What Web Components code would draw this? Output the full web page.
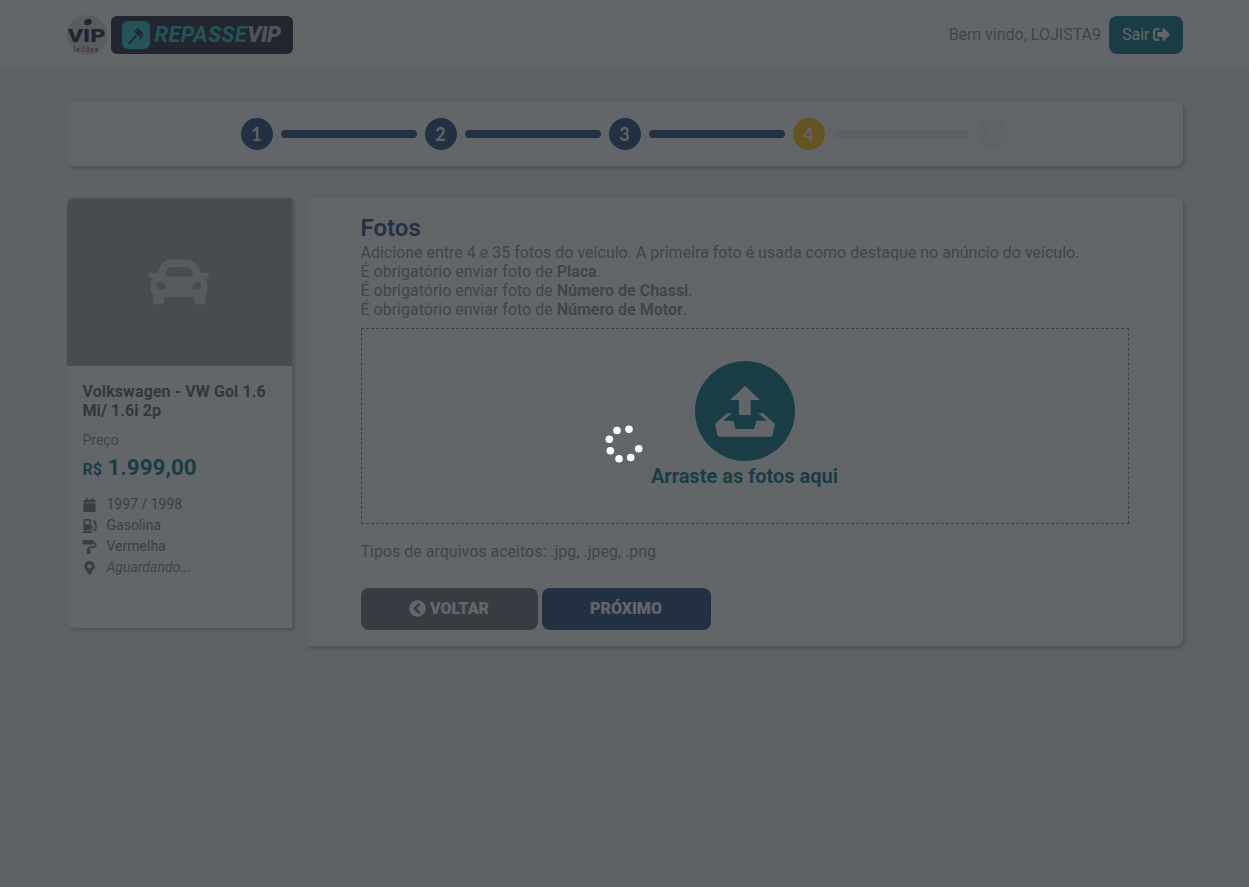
<!DOCTYPE html>
<html lang="pt-BR">
<head>
<meta charset="utf-8">
<title>Repasse VIP</title>
<style>
    html, body { margin: 0; padding: 0; height: 100%; }
    body { background: #eff1ee; font-family: Roboto, "Liberation Sans", sans-serif; font-size: 16px; color: #8c8f94; }
    .wrap { display: flex; gap: 15px; width: 1116px; margin: 32px auto 0; align-items: flex-start; }
</style>
</head>
<body>
<vip-header user="LOJISTA9"></vip-header>
<step-bar current="4" total="5"></step-bar>
<div class="wrap">
    <vehicle-card></vehicle-card>
    <photo-step></photo-step>
</div>
<loading-overlay></loading-overlay>

<script>
const ICONS = {
    car: ['0 0 512 512', 'M499.99 176h-59.87l-16.64-41.6C406.38 91.63 365.57 64 319.5 64h-127c-46.06 0-86.88 27.63-103.99 70.4L71.87 176H12.01C4.2 176-1.53 183.34.37 190.91l6 24C7.7 220.25 12.5 224 18.01 224h20.07C24.65 235.73 16 252.78 16 272v48c0 16.12 6.16 30.67 16 41.93V416c0 17.67 14.33 32 32 32h32c17.67 0 32-14.33 32-32v-32h256v32c0 17.67 14.33 32 32 32h32c17.67 0 32-14.33 32-32v-54.07c9.84-11.25 16-25.8 16-41.93v-48c0-19.22-8.65-36.27-22.07-48H494c5.51 0 10.31-3.75 11.64-9.09l6-24c1.89-7.57-3.84-14.91-11.65-14.91zm-352.06-17.83c7.29-18.22 24.94-30.17 44.57-30.17h127c19.63 0 37.28 11.95 44.57 30.17L384 208H128l19.93-49.83zM96 319.8c-19.2 0-32-12.76-32-31.9S76.8 256 96 256s48 28.71 48 47.85-28.8 15.95-48 15.95zm320 0c-19.2 0-48 3.19-48-15.95S396.8 256 416 256s32 12.76 32 31.9-12.8 31.9-32 31.9z'],
    calendar: ['0 0 448 512', 'M12 192h424c6.6 0 12 5.4 12 12v260c0 26.5-21.5 48-48 48H48c-26.5 0-48-21.5-48-48V204c0-6.6 5.4-12 12-12zm436-44v-36c0-26.5-21.5-48-48-48h-48V12c0-6.6-5.4-12-12-12h-40c-6.6 0-12 5.4-12 12v52H160V12c0-6.6-5.4-12-12-12h-40c-6.6 0-12 5.4-12 12v52H48C21.5 64 0 85.5 0 112v36c0 6.6 5.4 12 12 12h424c6.6 0 12-5.4 12-12z'],
    gas: ['0 0 512 512', 'M336 448H16c-8.8 0-16 7.2-16 16v32c0 8.8 7.2 16 16 16h320c8.8 0 16-7.2 16-16v-32c0-8.8-7.2-16-16-16zm157.2-340.7l-81-81c-6.2-6.2-16.4-6.2-22.6 0l-11.3 11.3c-6.2 6.2-6.2 16.4 0 22.6L416 97.9V160c0 28.1 20.9 51.3 48 55.2V376c0 13.2-10.8 24-24 24s-24-10.8-24-24v-32c0-48.6-39.4-88-88-88h-8V64c0-35.3-28.7-64-64-64H96C60.7 0 32 28.7 32 64v352h288V304h8c22.1 0 40 17.9 40 40v27.8c0 37.7 27 72 64.5 75.9 43 4.3 79.5-29.5 79.5-71.7V152.6c0-17-6.8-33.3-18.8-45.3zM256 192H96V64h160v128z'],
    roller: ['0 0 512 512', 'M416 128V32c0-17.67-14.33-32-32-32H32C14.33 0 0 14.33 0 32v96c0 17.67 14.33 32 32 32h352c17.67 0 32-14.33 32-32zm32-64v128c0 17.67-14.33 32-32 32H256c-35.35 0-64 28.65-64 64v32c-17.67 0-32 14.33-32 32v128c0 17.67 14.33 32 32 32h64c17.67 0 32-14.33 32-32V352c0-17.67-14.33-32-32-32v-32h160c53.02 0 96-42.98 96-96v-64c0-35.35-28.65-64-64-64z'],
    marker: ['0 0 384 512', 'M172.268 501.67C26.97 291.031 0 268.413 0 192 0 85.961 85.961 0 192 0s192 85.961 192 192c0 76.413-26.97 99.031-172.268 309.67-9.535 13.774-29.93 13.773-39.464 0zM192 272c44.183 0 80-35.817 80-80s-35.817-80-80-80-80 35.817-80 80 35.817 80 80 80z'],
    signout: ['0 0 512 512', 'M497 273L329 441c-15 15-41 4.5-41-17v-96H152c-13.3 0-24-10.7-24-24v-96c0-13.3 10.7-24 24-24h136V88c0-21.4 25.9-32 41-17l168 168c9.3 9.4 9.3 24.6 0 34zM192 436v-40c0-6.6-5.4-12-12-12H96c-17.7 0-32-14.3-32-32V160c0-17.7 14.3-32 32-32h84c6.6 0 12-5.4 12-12V76c0-6.6-5.4-12-12-12H96c-53 0-96 43-96 96v192c0 53 43 96 96 96h84c6.6 0 12-5.4 12-12z'],
    back: ['0 0 512 512', 'M256 504C119 504 8 393 8 256S119 8 256 8s248 111 248 248-111 248-248 248zM142.1 273l135.5 135.5c9.4 9.4 24.6 9.4 33.9 0l17-17c9.4-9.4 9.4-24.6 0-33.9L226.9 256l101.6-101.6c9.4-9.4 9.4-24.6 0-33.9l-17-17c-9.4-9.4-24.6-9.4-33.9 0L142.1 239c-9.4 9.4-9.4 24.6 0 34z']
};

function icon(name, size) {
    const [box, d] = ICONS[name];
    return `<svg width="${size}" height="${size}" viewBox="${box}" fill="currentColor" aria-hidden="true"><path d="${d}"/></svg>`;
}

class VipHeader extends HTMLElement {
    connectedCallback() {
        const user = this.getAttribute('user');
        this.attachShadow({ mode: 'open' });
        this.shadowRoot.innerHTML = `
            <style>
                :host { display: block; background: #fff; border-bottom: 1px solid #e4e6e6; }
                .bar { width: 1116px; height: 69px; margin: 0 auto; display: flex; align-items: center; justify-content: space-between; }
                .logos { display: flex; align-items: center; gap: 4px; }
                .round { position: relative; width: 40px; height: 40px; box-sizing: border-box; padding-top: 10px; border-radius: 50%; background: #dcdcde; display: flex; flex-direction: column; align-items: center; }
                .round::before { content: ""; position: absolute; top: 4px; left: 17px; width: 8px; height: 6px; border-radius: 50%; background: #1c2a3c; transform: rotate(-20deg); }
                .round b { display: block; font: 900 18px/21px Roboto, sans-serif; color: #1c2a3c; transform: scaleX(1.3); }
                .round span { font: 500 6.5px/8px Roboto, sans-serif; color: #b03a46; letter-spacing: .9px; }
                .brand { width: 182px; height: 38px; box-sizing: border-box; border-radius: 6px; background: #2a2a3a; display: flex; align-items: center; padding-left: 11px; gap: 5px; font: italic 900 22px/1 Roboto, sans-serif; }
                .brand .mark { width: 28px; height: 28px; border-radius: 6px; background: #25c3c6; display: flex; align-items: center; justify-content: center; }
                .brand .re { color: #25c3c6; font-weight: 700; letter-spacing: .35px; }
                .brand .vip { color: #c4c4c4; letter-spacing: -.4px; }
                .right { display: flex; align-items: center; gap: 8px; color: #8c8f94; }
                .right .name { color: #7d8a94; }
                .out { display: flex; align-items: center; gap: 3px; height: 38px; padding: 0 13px; border-radius: 8px; background: #0d7486; color: #fff; }
            </style>
            <div class="bar">
                <div class="logos">
                    <div class="round"><b>VIP</b><span>leilões</span></div>
                    <div class="brand">
                        <span class="mark">
                            <svg width="22" height="22" viewBox="0 0 22 22" fill="#2a2a3a"><path d="M3 19.3l7.6-8.4 1.5 1.4-7.6 8.4z"/><path d="M8.8 7.6l4-3.8 1 1-4 3.8zM14 14.8l3.8-4 1 1-3.8 4zM10.2 8.7l3.8-3.6 4.2 4.4-3.8 3.6z"/></svg>
                        </span>
                        <span><span class="re">REPASSE</span><span class="vip">VIP</span></span>
                    </div>
                </div>
                <div class="right">
                    <span>Bem vindo, <span class="name">${user}</span></span>
                    <span class="out">Sair ${icon('signout', 17)}</span>
                </div>
            </div>
        `;
    }
}
customElements.define('vip-header', VipHeader);

class StepBar extends HTMLElement {
    connectedCallback() {
        const current = +this.getAttribute('current');
        const total = +this.getAttribute('total');
        let items = '';
        for (let i = 1; i <= total; i++) {
            const cls = i < current ? 'done' : i === current ? 'now' : 'todo';
            items += `<span class="dot ${cls}">${i}</span>`;
            if (i < total) items += `<span class="line ${i < current ? 'done' : 'todo'}"></span>`;
        }
        this.attachShadow({ mode: 'open' });
        this.shadowRoot.innerHTML = `
            <style>
                :host { display: flex; justify-content: center; align-items: center; gap: 8px; width: 1116px; height: 64px; margin: 32px auto 0; background: #fff; border-radius: 8px; box-shadow: 2px 2px 4px rgba(0,0,0,.25); }
                .dot { width: 32px; height: 32px; border-radius: 50%; display: flex; align-items: center; justify-content: center; font: 700 18px Lato, sans-serif; color: #f4f4f4; }
                .line { width: 136px; height: 8px; border-radius: 4px; }
                .done { background: #2b4a78; }
                .now { background: #ffc20e; }
                .todo { background: #eeefe8; }
                .dot.todo { background: #f4f4f0; color: #fff; }
            </style>
            ${items}
        `;
    }
}
customElements.define('step-bar', StepBar);

class VehicleCard extends HTMLElement {
    connectedCallback() {
        const row = (name, text, cls = '') => `<li>${icon(name, 14)}<span class="${cls}">${text}</span></li>`;
        this.attachShadow({ mode: 'open' });
        this.shadowRoot.innerHTML = `
            <style>
                :host { display: block; flex: none; width: 225px; height: 430px; background: #fff; border-radius: 8px 0 0 8px; box-shadow: 2px 2px 4px rgba(0,0,0,.25); overflow: hidden; }
                .photo { height: 168px; background: #a5a8a8; display: flex; align-items: center; justify-content: center; color: #d8d9d9; }
                .info { padding: 16px 15px 16px 16px; }
                h2 { margin: 0; font-size: 16px; line-height: 19px; font-weight: 700; letter-spacing: .1px; color: #5f6166; }
                .lbl { margin-top: 12px; font-size: 14px; line-height: 17px; color: #8c8f94; }
                .price { margin-top: 4px; color: #0d7486; font-weight: 700; font-size: 22.4px; line-height: 28px; }
                .price small { font-size: 16px; }
                ul { list-style: none; margin: 10px 0 0; padding: 0; font-size: 14px; line-height: 21px; color: #777a80; }
                li { display: flex; align-items: center; }
                li svg { width: 25px; flex: none; margin-left: -6px; }
                li span { margin-left: 5px; }
                .wait { font-style: italic; color: #8c8f94; }
            </style>
            <div class="photo">${icon('car', 60)}</div>
            <div class="info">
                <h2>Volkswagen - VW Gol 1.6 Mi/ 1.6i 2p</h2>
                <div class="lbl">Preço</div>
                <div class="price"><small>R$</small> 1.999,00</div>
                <ul>
                    ${row('calendar', '1997 / 1998')}
                    ${row('gas', 'Gasolina')}
                    ${row('roller', 'Vermelha')}
                    ${row('marker', 'Aguardando...', 'wait')}
                </ul>
            </div>
        `;
    }
}
customElements.define('vehicle-card', VehicleCard);

class PhotoStep extends HTMLElement {
    connectedCallback() {
        this.attachShadow({ mode: 'open' });
        this.shadowRoot.innerHTML = `
            <style>
                :host { display: block; flex: 1; height: 448px; box-sizing: border-box; padding: 16px 54px 0; background: #fff; border-radius: 0 8px 8px 0; box-shadow: 2px 2px 4px rgba(0,0,0,.25); line-height: 19px; }
                h1 { margin: 0; font-size: 24px; line-height: 29px; font-weight: 600; color: #2b4a78; }
                p { margin: 0; }
                .drop { height: 196px; box-sizing: border-box; margin-top: 9px; border: 1px dashed #7d8086; display: flex; flex-direction: column; align-items: center; padding-top: 32px; color: #0d7486; }
                .drop svg { display: block; }
                .drop span { margin-top: 3px; font-size: 20px; line-height: 24px; font-weight: 700; }
                .types { margin-top: 18px; }
                .btns { display: flex; gap: 4px; margin-top: 27px; }
                .btn { height: 42px; padding-bottom: 2px; border-radius: 8px; display: flex; align-items: center; justify-content: center; gap: 4px; color: #fff; font-weight: 900; box-sizing: border-box; }
                .back { width: 177px; background: #6c717c; }
                .next { width: 169px; background: #2b4a78; }
            </style>
            <h1>Fotos</h1>
            <p>Adicione entre 4 e 35 fotos do veículo. A primeira foto é usada como destaque no anúncio do veículo.</p>
            <p>É obrigatório enviar foto de <b>Placa</b>.</p>
            <p>É obrigatório enviar foto de <b>Número de Chassi</b>.</p>
            <p>É obrigatório enviar foto de <b>Número de Motor</b>.</p>
            <div class="drop">
                <svg width="100" height="100" viewBox="0 0 100 100">
                    <circle cx="50" cy="50" r="50" fill="currentColor"/>
                    <path fill="#fff" d="M50 24.7L65 39H55.7V54H44V39H35z"/>
                    <path fill="#fff" d="M31.7 52.3H36.7L28.3 59.7H38.3L40.7 68H59L61.7 59.7H71.7L63.3 52.3H68.3L80 63L77.7 73.7Q77.3 75.7 75.5 75.7H24.5Q22.7 75.7 22.3 73.7L20 63z"/>
                </svg>
                <span>Arraste as fotos aqui</span>
            </div>
            <p class="types">Tipos de arquivos aceitos: .jpg, .jpeg, .png</p>
            <div class="btns">
                <div class="btn back">${icon('back', 17)}VOLTAR</div>
                <div class="btn next">PRÓXIMO</div>
            </div>
        `;
    }
}
customElements.define('photo-step', PhotoStep);

// dim layer while the upload is busy
class LoadingOverlay extends HTMLElement {
    connectedCallback() {
        const dots = [[5, -14.8], [-7, -13.5], [-14.7, -4.8], [-13.7, 6.8], [-5, 14.8], [6.7, 13.5], [14.7, 4.8]]
            .map(([x, y]) => `<circle cx="${x}" cy="${y}" r="3.8"/>`).join('');
        this.attachShadow({ mode: 'open' });
        this.shadowRoot.innerHTML = `
            <style>
                :host { position: fixed; inset: 0; display: flex; align-items: center; justify-content: center; background: rgba(33,37,41,.7); }
            </style>
            <svg width="40" height="40" viewBox="-20 -20 40 40" fill="#fff" style="margin-left:-1px">${dots}</svg>
        `;
    }
}
customElements.define('loading-overlay', LoadingOverlay);
</script>
</body>
</html>
